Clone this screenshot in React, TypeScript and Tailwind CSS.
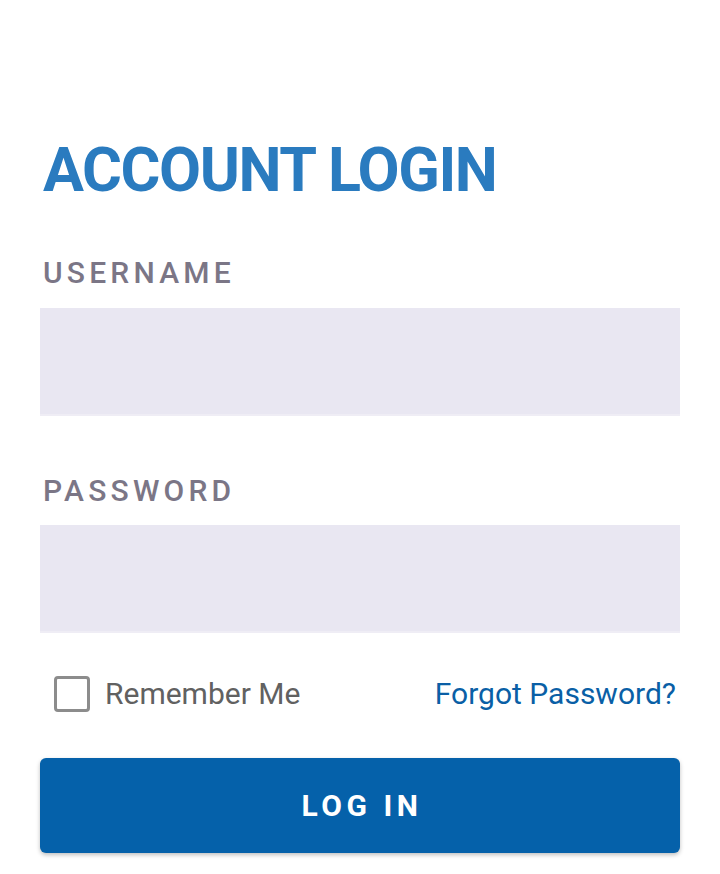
import React, { useState } from 'react';

export default function App() {
  const [remember, setRemember] = useState(false);

  return (
    <div
      className="min-h-screen bg-white px-10 pt-[140px]"
      style={{ fontFamily: 'Roboto, "Liberation Sans", sans-serif' }}
    >
      <h1 className="ml-[3px] text-[61px] font-bold leading-none tracking-[-1.4px] text-[#2a7bbf]">
        ACCOUNT LOGIN
      </h1>

      {/* Username */}
      <label className="mt-[57px] block pl-[3px] text-[30px] font-medium leading-none tracking-[4.2px] text-[#7b7686]">
        USERNAME
      </label>
      <input
        type="text"
        className="mt-[20px] block h-[108px] w-full border-b-2 border-[#efedf5] bg-[#e9e7f2] px-4 text-[27px] outline-none"
      />

      {/* Password */}
      <label className="mt-[60px] block pl-[3px] text-[30px] font-medium leading-none tracking-[4.2px] text-[#7b7686]">
        PASSWORD
      </label>
      <input
        type="password"
        className="mt-[19px] block h-[108px] w-full border-b-2 border-[#efedf5] bg-[#e9e7f2] px-4 text-[27px] outline-none"
      />

      {/* Remember / forgot */}
      <div className="mt-[43px] flex items-center justify-between pl-[14px] pr-1">
        <button
          type="button"
          onClick={() => setRemember(!remember)}
          className="flex items-center gap-[15px]"
        >
          <span className="block h-9 w-9 rounded-[4px] border-[3px] border-[#8c8c8c]" />
          <span className="text-[30px] leading-none text-[#616161]">Remember Me</span>
        </button>
        <a href="#" className="text-[30px] leading-none text-[#0a5fa6]">
          Forgot Password?
        </a>
      </div>

      <button
        type="button"
        className="mt-[46px] flex h-[95px] w-full items-center justify-center rounded-md bg-[#0561aa] pl-[4px] text-[30px] font-bold leading-none tracking-[4.5px] text-white shadow-[0_2px_4px_rgba(0,0,0,0.25)]"
      >
        LOG IN
      </button>
    </div>
  );
}
